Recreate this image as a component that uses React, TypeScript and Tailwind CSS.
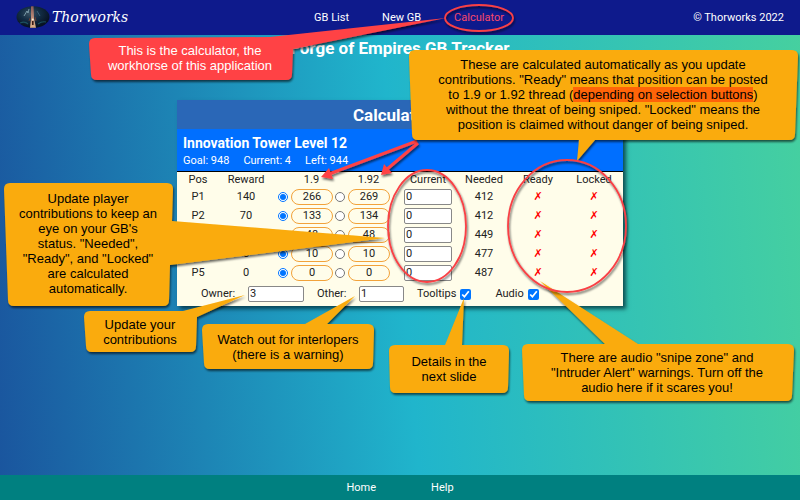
import React from "react";

type Row = {
  pos: string;
  reward: number;
  low: number;
  high: number;
  needed: number;
};

const rows: Row[] = [
  { pos: "P1", reward: 140, low: 266, high: 269, needed: 412 },
  { pos: "P2", reward: 70, low: 133, high: 134, needed: 412 },
  { pos: "P3", reward: 25, low: 48, high: 48, needed: 449 },
  { pos: "P4", reward: 5, low: 10, high: 10, needed: 477 },
  { pos: "P5", reward: 0, low: 0, high: 0, needed: 487 },
];

const columns = [
  { name: "Pos", width: "w-[34px]" },
  { name: "Reward", width: "w-[62px]" },
  { name: "1.9", width: "w-[57px]" },
  { name: "1.92", width: "w-[57px]" },
  { name: "Current", width: "w-[74px]" },
  { name: "Needed", width: "w-[38px]" },
  { name: "Ready", width: "w-[70px]" },
  { name: "Locked", width: "w-[42px]" },
];

function Logo() {
  return (
    <svg viewBox="0 0 34 22" className="h-[22px] w-[34px]" aria-hidden="true">
      <defs>
        <radialGradient id="sky" cx="42%" cy="35%" r="60%">
          <stop offset="0" stopColor="#3a5262" />
          <stop offset="0.5" stopColor="#122c44" />
          <stop offset="1" stopColor="#071222" />
        </radialGradient>
        <linearGradient id="beam" x1="0" y1="0" x2="0" y2="1">
          <stop offset="0" stopColor="#8a5a58" />
          <stop offset="0.5" stopColor="#b98a78" />
          <stop offset="1" stopColor="#e0b088" />
        </linearGradient>
        <filter id="soft">
          <feGaussianBlur stdDeviation="0.5" />
        </filter>
        <clipPath id="oval">
          <ellipse cx="17" cy="11" rx="16.5" ry="10.8" />
        </clipPath>
      </defs>
      <g clipPath="url(#oval)">
        <rect width="34" height="22" fill="url(#sky)" />
        <g filter="url(#soft)">
          <path d="M8 10l3-5 1 2 1-4" stroke="#8fb0bc" strokeWidth="1" fill="none" opacity="0.8" />
          <path d="M21 5l3 5" stroke="#4f7f98" strokeWidth="1" opacity="0.6" />
          <path d="M15 0h2.5l0.5 12 2 10h-6l1-10z" fill="url(#beam)" />
          <path d="M13 15l1-3M20 15l-1-4" stroke="#6a3b30" strokeWidth="1" />
          <path d="M16 15h1.6v4H16z" fill="#3a1d18" />
          <circle cx="16.8" cy="13.5" r="1" fill="#fff0d0" />
          <path d="M4 17q5-2 8 1M22 18q4-3 8-2" stroke="#1c4f60" strokeWidth="1.2" fill="none" />
        </g>
      </g>
    </svg>
  );
}

function MultiplierCell({ row, label, value, checked }: { row: string; label: string; value: number; checked: boolean }) {
  return (
    <td className="p-0">
      <div className="flex items-center gap-[3px]">
        <input
          type="radio"
          name={row}
          defaultChecked={checked}
          aria-label={`${row} at ${label}`}
          className="ml-px h-[10px] w-[10px] shrink-0 accent-[#0075ff]"
        />
        <span className="flex h-[16px] w-[42px] items-center justify-center rounded-full border border-[#f2a23a]">
          {value}
        </span>
      </div>
    </td>
  );
}

function Calculator() {
  return (
    <section className="mx-auto w-full max-w-[446px] bg-[#fffdea] text-[11px] text-[#222] shadow-[3px_3px_4px_rgba(0,40,50,0.75)]">
      <h2 className="bg-[#2a67b7] pt-px pr-4 text-center text-[17px] leading-7 font-bold text-white">Calculator</h2>
      <header className="border-b border-black bg-[#006fff] px-1.5 pt-1 pb-0.5 text-white">
        <h3 className="text-sm leading-5 font-bold">Innovation Tower Level 12</h3>
        <p className="flex gap-3.5 leading-4">
          <span>Goal: 948</span>
          <span>Current: 4</span>
          <span>Left: 944</span>
        </p>
      </header>
      <div className="pr-2 pl-1">
        <table className="w-full table-fixed border-collapse text-center">
          <thead>
            <tr className="h-[15px] leading-[15px]">
              {columns.map((c) => (
                <th
                  key={c.name}
                  className={`${c.width} p-0 font-normal whitespace-nowrap ${c.name.startsWith("1.9") ? "pl-3" : ""}`}
                >
                  {c.name}
                </th>
              ))}
            </tr>
          </thead>
          <tbody>
            {rows.map((r) => (
              <tr key={r.pos} className="h-[19px] leading-[15px]">
                <td className="p-0">{r.pos}</td>
                <td className="p-0">{r.reward}</td>
                <MultiplierCell row={r.pos} label="1.9" value={r.low} checked />
                <MultiplierCell row={r.pos} label="1.92" value={r.high} checked={false} />
                <td className="p-0">
                  <input
                    type="text"
                    defaultValue="0"
                    aria-label={`${r.pos} current`}
                    className="mx-auto block h-[16px] w-[48px] rounded-xs border border-[#888] bg-white px-px"
                  />
                </td>
                <td className="p-0">{r.needed}</td>
                <td className="p-0 font-['DejaVu_Sans',sans-serif] text-[#f00]">✗</td>
                <td className="p-0 font-['DejaVu_Sans',sans-serif] text-[#f00]">✗</td>
              </tr>
            ))}
          </tbody>
        </table>
      </div>
      <div className="flex items-center py-1 pl-6 leading-4">
        <label htmlFor="owner" className="w-[47px]">Owner:</label>
        <input id="owner" type="text" defaultValue="3" className="h-[16px] w-[56px] rounded-xs border border-[#888] bg-white px-px" />
        <label htmlFor="other" className="ml-[13px] w-[42px]">Other:</label>
        <input id="other" type="text" defaultValue="1" className="h-[16px] w-[45px] rounded-xs border border-[#888] bg-white px-px" />
        <label className="ml-[13px] flex items-center gap-1">
          Tooltips
          <input type="checkbox" defaultChecked className="h-[11px] w-[11px] accent-[#0075ff]" />
        </label>
        <label className="ml-6 flex items-center gap-1">
          Audio
          <input type="checkbox" defaultChecked className="h-[11px] w-[11px] accent-[#0075ff]" />
        </label>
      </div>
    </section>
  );
}

function Note({ className, children }: { className: string; children: React.ReactNode }) {
  return (
    <p className={`absolute text-center text-[13px] leading-[15px] whitespace-nowrap font-['Liberation_Sans',Arial,sans-serif] ${className}`}>
      {children}
    </p>
  );
}

/* Tutorial callouts drawn over the page */
function Annotations() {
  return (
    <div className="pointer-events-none absolute top-0 left-1/2 h-[500px] w-[800px] -translate-x-1/2">
      <svg viewBox="0 0 800 500" className="absolute inset-0 h-full w-full" aria-hidden="true">
        <defs>
          <filter id="shade" x="-10%" y="-10%" width="125%" height="130%">
            <feDropShadow dx="1" dy="2" stdDeviation="1.3" floodColor="#000" floodOpacity="0.6" />
          </filter>
        </defs>
        <g filter="url(#shade)" stroke="#ff4245" fill="#ff4245">
          <path d="M417 141L329 174M418 143L386 170" strokeWidth="3" />
          <path d="M321 177L329 168L333 179ZM381 175L384 164L392 173Z" stroke="none" />
        </g>
        <g filter="url(#shade)" fill="#faab0b">
          <path d="M415 50H792Q798 50 798 56L795 134Q795 140 789 140H595L577 161L579 140H418Q412 140 412 134L409 56Q409 50 415 50Z" />
          <path d="M10 183H167Q173 183 173 189L172 221L385 238L170 265L169 300Q169 306 163 306H14Q8 306 8 300L4 189Q4 183 10 183Z" />
          <path d="M90 311H183L245 295L197 317L196 346Q196 352 190 352H92Q86 352 86 346L84 317Q84 311 90 311Z" />
          <path d="M208 324H305L355 296L327 324H368Q374 324 374 330L373 363Q373 369 367 369H210Q204 369 204 363L202 330Q202 324 208 324Z" />
          <path d="M395 345H445L464 298L462 345H503Q509 345 509 351L508 387Q508 393 502 393H396Q390 393 390 387L389 351Q389 345 395 345Z" />
          <path d="M528 344H605L540 281L638 344H788Q794 344 794 350L792 395Q792 401 786 401H530Q524 401 524 395L522 350Q522 344 528 344Z" />
        </g>
        <path
          filter="url(#shade)"
          fill="#ff4245"
          d="M95 38L270 37L446 18L293 49L292 74Q292 80 286 80H97Q91 80 91 74L89 44Q89 38 95 38Z"
        />
        <g filter="url(#shade)" fill="none" stroke="#f94045" strokeWidth="1.8">
          <ellipse cx="479" cy="18" rx="34" ry="13" />
          <ellipse cx="427" cy="226" rx="39" ry="56" />
          <ellipse cx="567" cy="226" rx="59" ry="66" />
        </g>
      </svg>
      <Note className="top-[43px] left-[89px] w-[202px] text-white">
        This is the calculator, the<br />workhorse of this application
      </Note>
      <Note className="top-[57px] left-[409px] w-[388px]">
        These are calculated automatically as you update<br />
        contributions. "Ready" means that position can be posted<br />
        to 1.9 or 1.92 thread (<mark className="bg-[#ff6408] text-inherit">depending on selection buttons</mark>)<br />
        without the threat of being sniped. "Locked" means the<br />
        position is claimed without danger of being sniped.
      </Note>
      <Note className="top-[191px] left-[6px] w-[164px]">
        Update player<br />contributions to keep an<br />eye on your GB's<br />status. "Needed",<br />"Ready", and "Locked"<br />are calculated<br />automatically.
      </Note>
      <Note className="top-[317px] left-[85px] w-[110px]">
        Update your<br />contributions
      </Note>
      <Note className="top-[332px] left-[203px] w-[170px]">
        Watch out for interlopers<br />(there is a warning)
      </Note>
      <Note className="top-[354px] left-[389px] w-[120px]">
        Details in the<br />next slide
      </Note>
      <Note className="top-[350px] left-[522px] w-[270px]">
        There are audio "snipe zone" and<br />"Intruder Alert" warnings. Turn off the<br />audio here if it scares you!
      </Note>
    </div>
  );
}

export default function App() {
  return (
    <div className="relative flex min-h-screen flex-col overflow-hidden bg-[linear-gradient(85deg,#1a559e_0%,#20b5cc_50%,#46d09f_100%)] font-[Roboto,sans-serif] text-[11px]">
      <nav className="grid h-[35px] grid-cols-3 items-center bg-[#0e1a8c] px-4 text-white">
        <a href="#top" className="flex items-center gap-0.5 pb-0.5">
          <Logo />
          <span className="text-sm leading-5 italic font-['DejaVu_Serif',serif]">Thorworks</span>
        </a>
        <div className="flex justify-center gap-[33px] pt-0.5 pl-[18px] whitespace-nowrap">
          <a href="#list">GB List</a>
          <a href="#new">New GB</a>
          <a href="#calculator" className="text-[#f8486a]">Calculator</a>
        </div>
        <p className="pt-0.5 text-right">© Thorworks 2022</p>
      </nav>
      <main className="flex-1">
        <h1 className="pt-px text-center text-[17px] leading-6 font-bold text-white">Forge of Empires GB Tracker</h1>
        <div className="pt-10">
          <Calculator />
        </div>
      </main>
      <footer className="flex h-[25px] items-center justify-center gap-[55px] bg-[#008080] pt-0.5 text-white">
        <a href="#home">Home</a>
        <a href="#help">Help</a>
      </footer>
      <Annotations />
    </div>
  );
}
